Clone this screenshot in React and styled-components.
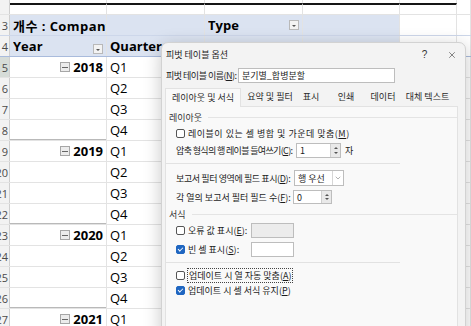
import styled, { createGlobalStyle } from 'styled-components';
import { ChevronDown, X } from 'lucide-react';

const GlobalStyle = createGlobalStyle`
  html, body { margin: 0; padding: 0; background: #fff; overflow: hidden; }
`;

const COLS = [97, 98, 98, 97, 57];

const Screen = styled.div`
  position: relative;
  width: 471px;
  height: 326px;
  overflow: hidden;
  font-family: "Open Sans", "Noto Sans CJK KR", sans-serif;
  color: #000;
`;

const Sheet = styled.div`
  display: flex;
  flex-direction: column;
`;

const Row = styled.div`
  display: flex;
  flex: none;
  height: ${p => p.$h ?? 21}px;
  box-sizing: border-box;
  border-bottom: ${p => (p.$noLine ? 'none' : `1px solid ${p.$line ?? '#e3e3e3'}`)};
`;

const RowHead = styled.div`
  width: 10px;
  flex: none;
  background: ${p => (p.$sel ? '#d6dcd8' : '#f2f2f2')};
  border-right: 1px solid #cfcfcf;
  box-sizing: border-box;
  display: flex;
  justify-content: flex-end;
  align-items: center;
  overflow: hidden;
  white-space: nowrap;
  font-size: 11px;
  color: #4a4a4a;
  padding-right: 1px;
`;

const Cell = styled.div`
  width: ${p => p.$w}px;
  flex: ${p => (p.$w ? 'none' : '1')};
  box-sizing: border-box;
  border-right: 1px solid #e3e3e3;
  border-top: ${p => (p.$thick ? '2px solid #151515' : 'none')};
  background: ${p => p.$bg ?? 'transparent'};
  box-shadow: ${p => (p.$group ? 'inset 0 -1px 0 #b9b9b9' : 'none')};
  display: flex;
  align-items: center;
  justify-content: ${p => p.$justify ?? 'flex-start'};
  gap: 3px;
  padding: 0 ${p => p.$pr ?? 3}px 0 3px;
  overflow: hidden;
  white-space: nowrap;
  font-size: 13px;
  font-weight: ${p => (p.$bold ? 700 : 400)};
`;

const Grow = styled.span`
  flex: 1;
  overflow: hidden;
  letter-spacing: ${p => p.$ls ?? 0}px;
`;

const FilterButton = styled.span`
  width: 10px;
  height: 10px;
  flex: none;
  box-sizing: border-box;
  border: 1px solid #b9b9b9;
  background: #f3f3f3;
  display: flex;
  align-items: center;
  justify-content: center;
  align-self: ${p => p.$align ?? 'center'};
  margin-bottom: ${p => p.$mb ?? 0}px;
  &::after {
    content: '';
    border-left: 2px solid transparent;
    border-right: 2px solid transparent;
    border-top: 2px solid #555;
    margin-top: 2px;
  }
`;

const Collapse = styled.span`
  width: 10px;
  height: 10px;
  box-sizing: border-box;
  border: 1px solid #a6a6a6;
  background: #ececec;
  display: flex;
  align-items: center;
  justify-content: center;
  &::after {
    content: '';
    width: 6px;
    height: 1px;
    background: #666;
  }
`;

const BLUE = '#dbe3f1';

/* ---------- dialog ---------- */

const Dialog = styled.div`
  position: absolute;
  left: 161px;
  top: 42px;
  width: 305px;
  height: 300px;
  box-sizing: border-box;
  background: #f3f3f3;
  border: 1px solid #d2d2d2;
  border-radius: 7px;
  box-shadow: 0 4px 18px rgba(0, 0, 0, 0.22);
  font-family: "Noto Sans CJK KR", "Noto Sans", sans-serif;
  font-size: 9px;
  color: #1c1c1c;
  display: flex;
  flex-direction: column;
`;

const TitleBar = styled.div`
  display: flex;
  align-items: center;
  height: 23px;
  padding-left: 4px;
`;

const TitleText = styled.span`
  flex: 1;
`;

const TitleButton = styled.span`
  width: 27px;
  height: 23px;
  display: flex;
  align-items: center;
  justify-content: center;
  font-family: "Liberation Sans", sans-serif;
  font-size: 10px;
  color: #333;
`;

const NameRow = styled.div`
  display: flex;
  align-items: center;
  height: 18px;
  padding-left: 4px;
`;

const Label = styled.span`
  width: ${p => (p.$w ? `${p.$w}px` : 'auto')};
  flex: none;
  white-space: nowrap;
  letter-spacing: ${p => p.$ls ?? 0}px;
`;

const TextBox = styled.span`
  width: ${p => p.$w}px;
  height: ${p => p.$h ?? 15}px;
  flex: none;
  box-sizing: border-box;
  border: 1px solid #bdbdbd;
  background: ${p => (p.$disabled ? '#ececec' : '#fff')};
  display: flex;
  align-items: center;
  padding-left: 3px;
  white-space: nowrap;
`;

const Tabs = styled.div`
  display: flex;
  margin: 4px 0 0 3px;
  height: 18px;
`;

const Tab = styled.span`
  width: ${p => p.$w}px;
  flex: none;
  box-sizing: border-box;
  text-align: center;
  line-height: 17px;
  white-space: nowrap;
  color: #2a2a2a;
  ${p =>
    p.$active &&
    `
    background: #f9f9f9;
    border: 1px solid #e2e2e2;
    border-bottom: none;
    position: relative;
    z-index: 1;
    height: 19px;
  `}
`;

const Panel = styled.div`
  flex: 1;
  margin-left: 3px;
  width: 293px;
  box-sizing: border-box;
  background: #f9f9f9;
  border: 1px solid #e2e2e2;
  border-bottom: none;
  padding-top: 3px;
  display: flex;
  flex-direction: column;
`;

const GroupLabel = styled.div`
  display: flex;
  align-items: center;
  gap: 6px;
  height: 14px;
  padding-left: 3px;
  margin-top: ${p => p.$mt ?? 0}px;
  color: #333;
  &::after {
    content: '';
    flex: 1;
    height: 1px;
    background: #e4e4e4;
  }
`;

const Field = styled.div`
  display: flex;
  align-items: center;
  height: ${p => p.$h ?? 16}px;
  margin-top: ${p => p.$mt ?? 0}px;
  padding-left: 10px;
  white-space: nowrap;
  letter-spacing: ${p => p.$ls ?? 0}px;
`;

const Separator = styled.div`
  width: 234px;
  height: 1px;
  margin: ${p => p.$m ?? '5px 0 6px 0'};
  background: #e2e2e2;
`;

const Check = styled.span`
  width: 9px;
  height: 9px;
  flex: none;
  box-sizing: border-box;
  border-radius: 2px;
  margin-right: 3px;
  border: 1px solid ${p => (p.$on ? '#1f66c1' : '#555')};
  background: ${p => (p.$on ? '#1f66c1' : '#fff')};
  display: flex;
  align-items: center;
  justify-content: center;
  &::after {
    content: '';
    display: ${p => (p.$on ? 'block' : 'none')};
    width: 4px;
    height: 2px;
    border-left: 1px solid #fff;
    border-bottom: 1px solid #fff;
    transform: rotate(-45deg) translate(0.5px, -0.5px);
  }
`;

const Focus = styled.span`
  outline: 1px dotted #444;
  outline-offset: 0;
  padding: 0 1px;
  white-space: nowrap;
`;

const Spin = styled.span`
  display: flex;
  flex: none;
  width: ${p => p.$w}px;
  height: ${p => p.$h ?? 15}px;
  box-sizing: border-box;
  border: 1px solid #bdbdbd;
  background: #fff;
  letter-spacing: 0;
`;

const SpinValue = styled.span`
  flex: 1;
  display: flex;
  align-items: center;
  padding-left: 3px;
`;

const SpinArrows = styled.span`
  width: 9px;
  display: flex;
  flex-direction: column;
  justify-content: space-evenly;
  align-items: center;
  background: #e9e9e9;
  border-left: 1px solid #cfcfcf;
  &::before,
  &::after {
    content: '';
    border-left: 2px solid transparent;
    border-right: 2px solid transparent;
  }
  &::before {
    border-bottom: 2px solid #555;
  }
  &::after {
    border-top: 2px solid #555;
  }
`;

const SelectChevron = styled.span`
  width: 10px;
  display: flex;
  align-items: center;
  justify-content: center;
  border-left: 1px solid #d6d6d6;
  color: #666;
`;

const Suffix = styled.span`
  margin-left: 4px;
`;

const Key = ({ k }) => (
  <>
    (<u>{k}</u>)
  </>
);

const rows = [
  { year: '2018', q: 'Q1' },
  { q: 'Q2' },
  { q: 'Q3' },
  { q: 'Q4', end: true },
  { year: '2019', q: 'Q1' },
  { q: 'Q2' },
  { q: 'Q3' },
  { q: 'Q4', end: true },
  { year: '2020', q: 'Q1' },
  { q: 'Q2' },
  { q: 'Q3' },
  { q: 'Q4', end: true },
  { year: '2021', q: 'Q1' },
];

const EmptyCells = ({ from = 2, thick }) => (
  <>
    {COLS.slice(from).map((w, i) => (
      <Cell key={i} $w={w} $thick={thick} />
    ))}
    <Cell />
  </>
);

export default function App() {
  return (
    <Screen>
      <GlobalStyle />
      <Sheet>
        <Row $h={3} $noLine>
          <RowHead />
          {COLS.map((w, i) => (
            <Cell key={i} $w={w} />
          ))}
          <Cell />
        </Row>
        <Row $h={12}>
          <RowHead />
          {COLS.map((w, i) => (
            <Cell key={i} $w={w} $thick />
          ))}
          <Cell />
        </Row>
        <Row $line="#cdd7ea">
          <RowHead>13</RowHead>
          <Cell $w={COLS[0]} $bg={BLUE} $bold $pr={0}>
            <Grow $ls={0.45}>개수 : Company</Grow>
          </Cell>
          <Cell $w={COLS[1]} $bg={BLUE} />
          <Cell $w={COLS[2]} $bg={BLUE} $bold>
            <Grow>Type</Grow>
            <FilterButton />
          </Cell>
          <Cell $w={COLS[3]} $bg={BLUE} />
          <Cell $w={COLS[4]} />
          <Cell />
        </Row>
        <Row $line="#a9bbdc">
          <RowHead>14</RowHead>
          <Cell $w={COLS[0]} $bg={BLUE} $bold>
            <Grow>Year</Grow>
            <FilterButton $align="flex-end" $mb={2} />
          </Cell>
          <Cell $w={COLS[1]} $bg={BLUE} $bold>
            Quarter
          </Cell>
          <Cell $w={COLS[2]} $bg={BLUE} />
          <Cell $w={COLS[3]} $bg={BLUE} />
          <Cell $w={COLS[4]} />
          <Cell />
        </Row>
        {rows.map((r, i) => (
          <Row key={i}>
            <RowHead $sel={i === 0}>{15 + i}</RowHead>
            <Cell $w={COLS[0]} $justify="flex-end" $bold $group={r.end}>
              {r.year && (
                <>
                  <Collapse />
                  {r.year}
                </>
              )}
            </Cell>
            <Cell $w={COLS[1]}>{r.q}</Cell>
            <EmptyCells />
          </Row>
        ))}
      </Sheet>

      <Dialog>
        <TitleBar>
          <TitleText>피벗 테이블 옵션</TitleText>
          <TitleButton>?</TitleButton>
          <TitleButton>
            <X size={10} strokeWidth={1.4} />
          </TitleButton>
        </TitleBar>
        <NameRow>
          <Label $w={72} $ls={-0.5}>
            피벗 테이블 이름<Key k="N" />:
          </Label>
          <TextBox $w={157}>분기별_합병분할</TextBox>
        </NameRow>
        <Tabs>
          <Tab $w={76} $active>
            레이아웃 및 서식
          </Tab>
          <Tab $w={58}>요약 및 필터</Tab>
          <Tab $w={24}>표시</Tab>
          <Tab $w={46}>인쇄</Tab>
          <Tab $w={28}>데이터</Tab>
          <Tab $w={61}>대체 텍스트</Tab>
        </Tabs>
        <Panel>
          <GroupLabel>레이아웃</GroupLabel>
          <Field $h={18} $ls={0.5}>
            <Check />
            레이블이 있는 셀 병합 및 가운데 맞춤<Key k="M" />
          </Field>
          <Field>
            <Label $w={120} $ls={-0.65}>
              압축 형식의 행 레이블 들여쓰기<Key k="C" />:
            </Label>
            <Spin $w={45}>
              <SpinValue>1</SpinValue>
              <SpinArrows />
            </Spin>
            <Suffix>자</Suffix>
          </Field>
          <Separator />
          <Field>
            <Label $w={118} $ls={-0.4}>
              보고서 필터 영역에 필드 표시<Key k="D" />:
            </Label>
            <Spin $w={50} $h={16}>
              <SpinValue>행 우선</SpinValue>
              <SelectChevron>
                <ChevronDown size={8} strokeWidth={1.5} />
              </SelectChevron>
            </Spin>
          </Field>
          <Field $mt={3}>
            <Label $w={117}>
              각 열의 보고서 필터 필드 수<Key k="F" />:
            </Label>
            <Spin $w={39} $h={14}>
              <SpinValue>0</SpinValue>
              <SpinArrows />
            </Spin>
          </Field>
          <GroupLabel $mt={2}>서식</GroupLabel>
          <Field $h={18}>
            <Check />
            <Label $w={63}>
              오류 값 표시<Key k="E" />:
            </Label>
            <TextBox $w={43} $disabled />
          </Field>
          <Field $h={18} $mt={1}>
            <Check $on />
            <Label $w={63}>
              빈 셀 표시<Key k="S" />:
            </Label>
            <TextBox $w={43} />
          </Field>
          <Separator $m="4px 0 5px 0" />
          <Field $h={15}>
            <Check />
            <Focus>
              업데이트 시 열 자동 맞춤<Key k="A" />
            </Focus>
          </Field>
          <Field $h={15}>
            <Check $on />
            업데이트 시 셀 서식 유지<Key k="P" />
          </Field>
        </Panel>
      </Dialog>
    </Screen>
  );
}
